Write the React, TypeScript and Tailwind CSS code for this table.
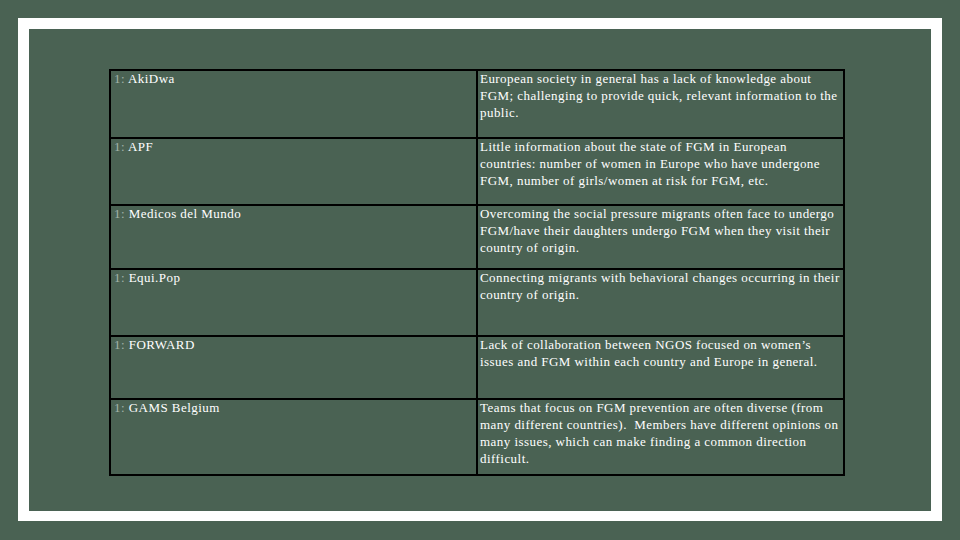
import React from 'react';

const rows = [
    { name: 'AkiDwa', h: 'h-[66px]', text: 'European society in general has a lack of knowledge about FGM; challenging to provide quick, relevant information to the public.' },
    { name: 'APF', h: 'h-[67px]', text: 'Little information about the state of FGM in European countries: number of women in Europe who have undergone FGM, number of girls/women at risk for FGM, etc.' },
    { name: 'Medicos del Mundo', h: 'h-[64px]', text: 'Overcoming the social pressure migrants often face to undergo FGM/have their daughters undergo FGM when they visit their country of origin.' },
    { name: 'Equi.Pop', h: 'h-[67px]', text: 'Connecting migrants with behavioral changes occurring in their country of origin.' },
    { name: 'FORWARD', h: 'h-[63px]', text: 'Lack of collaboration between NGOS focused on women\u2019s issues and FGM within each country and Europe in general.' },
    { name: 'GAMS Belgium', h: 'h-[76px]', text: 'Teams that focus on FGM prevention are often diverse (from many different countries).  Members have different opinions on many issues, which can make finding a common direction difficult.' },
];

export default function App() {
    return (
        <div className="w-[960px] h-[540px] bg-[#4a6253] pt-[18px] pl-[18px] overflow-hidden" style={{ fontFamily: '"Liberation Serif", "Times New Roman", serif' }}>
            <div className="w-[924px] h-[503px] border-[11px] border-b-[10px] border-white pl-[80px] pt-[40px]">
                <div className="w-[736px] border-2 border-black text-[13px] leading-[17px] tracking-[0.45px] text-white">
                    {rows.map((r, i) => (
                        <div key={r.name} className={`flex ${r.h} ${i > 0 ? 'border-t-2 border-black' : ''}`}>
                            <div className="w-[365px] pl-[3px] -mt-[1px] whitespace-pre">
                                <span className="text-[#a3b3a9]">1: </span>{r.name}
                            </div>
                            <div className="w-[367px] border-l-2 border-black pl-[2px] pr-[1px]">
                                <div className="-mt-[1px] whitespace-pre-wrap">{r.text}</div>
                            </div>
                        </div>
                    ))}
                </div>
            </div>
        </div>
    );
}
